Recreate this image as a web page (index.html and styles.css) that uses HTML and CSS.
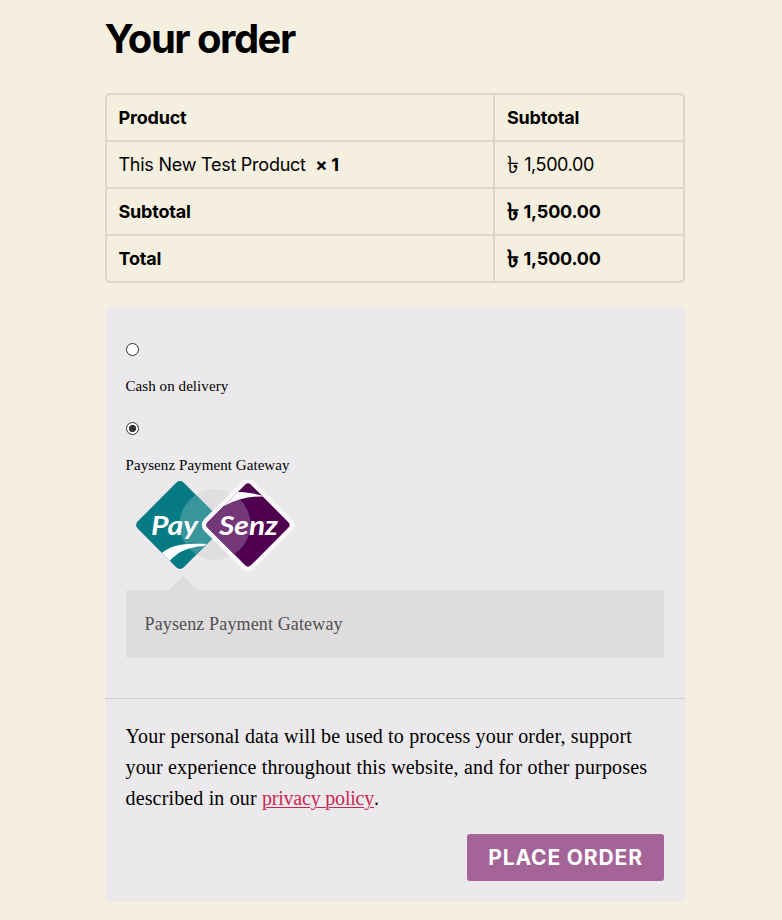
FILE: index.html
```html
<!DOCTYPE html>
<html lang="en">
<head>
<meta charset="utf-8">
<title>Checkout</title>
<link rel="stylesheet" href="styles.css">
</head>
<body>
<main class="checkout">
  <h3 class="heading">Your order</h3>
  <table class="order">
    <thead>
      <tr><th>Product</th><th>Subtotal</th></tr>
    </thead>
    <tbody>
      <tr><td>This New Test Product&nbsp; <strong class="quantity">×&nbsp;1</strong></td><td class="price"><span class="taka">৳</span>&nbsp;1,500.00</td></tr>
    </tbody>
    <tfoot>
      <tr><th>Subtotal</th><th><span class="taka">৳</span>&nbsp;1,500.00</th></tr>
      <tr><th>Total</th><th><span class="taka">৳</span>&nbsp;1,500.00</th></tr>
    </tfoot>
  </table>
  <section class="payment">
    <ul class="methods">
      <li class="method">
        <input class="radio" type="radio" name="payment" id="cod">
        <label class="method-label" for="cod">Cash on delivery</label>
      </li>
      <li class="method">
        <input class="radio" type="radio" name="payment" id="paysenz" checked>
        <label class="method-label" for="paysenz">Paysenz Payment Gateway
          <svg class="logo" width="180" height="100" viewBox="0 0 180 100" role="img" aria-label="PaySenz">
            <defs>
              <clipPath id="teal"><rect x="22.5" y="12.5" width="65" height="65" rx="5" transform="rotate(45 55 45)"/></clipPath>
              <clipPath id="plum"><rect x="92.5" y="14.5" width="61" height="61" rx="4" transform="rotate(45 123 45)"/></clipPath>
            </defs>
            <circle cx="90" cy="44.500" r="35.500" fill="#e0dedf"/>
            <g clip-path="url(#teal)">
              <rect x="8" width="94" height="92" fill="#067b84"/>
              <circle cx="90" cy="44.500" r="35.500" fill="#38959c"/>
              <path d="M35 75C44 65 58 63 82 64L79 66C63 67 53 71 43 83Z" fill="#fff"/>
            </g>
            <rect x="88" y="10" width="70" height="70" rx="8" transform="rotate(45 123 45)" fill="#f9f7f9"/>
            <g clip-path="url(#plum)">
              <rect x="77" width="92" height="92" fill="#500050"/>
              <circle cx="90" cy="44.500" r="35.500" fill="#743778"/>
              <path d="M98 25L108 12C117 12 128 12.500 140 16.500Q118 15.500 99 26Z" fill="#fff"/>
            </g>
            <text class="logo-text" x="26" y="54.500" textLength="47" lengthAdjust="spacingAndGlyphs">Pay</text>
            <text class="logo-text" x="94" y="54.500" textLength="59" lengthAdjust="spacingAndGlyphs">Senz</text>
          </svg>
        </label>
        <div class="description">Paysenz Payment Gateway</div>
      </li>
    </ul>
    <div class="place">
      <p class="privacy"><span class="line">Your personal data will be used to process your order, support</span> <span class="line">your experience throughout this website, and for other purposes</span> <span class="line line-last">described in our <a class="link" href="#">privacy policy</a>.</span></p>
      <button class="button" type="button">Place order</button>
    </div>
  </section>
</main>
</body>
</html>
```
FILE: styles.css
```css
* { box-sizing: border-box; }
body {
  margin: 0;
  background: #f5efe0;
  color: #000;
  font-family: Inter, "Noto Sans", sans-serif;
}
.checkout { width: 580px; margin: 0 0 0 105px; padding-top: 14px; }
.heading { margin: 0 0 29px; font-size: 40px; line-height: 50px; font-weight: 700; letter-spacing: -1.5px; text-indent: -0.5px; }
.order {
  width: 580px;
  table-layout: fixed;
  border: 2px solid #dcd7ca;
  border-radius: 5px;
  border-spacing: 0;
  border-collapse: separate;
  font-size: 18px;
  line-height: 27px;
  overflow: hidden;
}
.order th, .order td { padding: 9px 12px; height: 47px; text-align: left; white-space: nowrap; }
.order tr > :first-child { padding-left: 11.5px; border-right: 2px solid #dcd7ca; }
.order thead th, .order tbody td, .order tfoot tr:first-child th { border-bottom: 2px solid #dcd7ca; }
.order tfoot tr:last-child th { height: 45px; }
.order th { font-weight: 700; letter-spacing: -0.2px; }
.order td { font-weight: 400; letter-spacing: -0.25px; }
.order .price { letter-spacing: -0.4px; }
.quantity { font-weight: 700; letter-spacing: -0.3px; }
.order thead th:first-child { width: 388px; }
.taka { position: relative; top: 2px; display: inline-block; width: 12.5px; font-size: 24px; line-height: 0; letter-spacing: 0; }
.payment { margin-top: 24px; height: 595px; background: #ebe9eb; border-radius: 5px; }
.methods { margin: 0; padding: 35px 21px 0 20.5px; height: 392px; list-style: none; border-bottom: 1px solid #d0cdd2; }
.method { height: 79px; }
.radio {
  display: block;
  appearance: none;
  width: 13px;
  height: 13px;
  margin: 1px 0 15px;
  border: 1px solid #333;
  border-radius: 50%;
  background: #fff;
}
.method + .method .radio { margin-top: 0; }
.radio:checked { background: radial-gradient(circle, #333 0 3.3px, #fff 3.9px); }
.method-label { display: block; font-family: "Liberation Serif", serif; font-size: 15px; line-height: 30px; letter-spacing: 0.07px; }
.logo { display: block; margin: 0 0 0 -0.5px; }
.logo-text { font: italic 700 27px Lato, sans-serif; fill: #fff; letter-spacing: 0; }
.description {
  position: relative;
  margin-top: 10px;
  height: 68px;
  padding: 19px;
  border-radius: 2px;
  background: #dfdcde;
  color: #515151;
  font: 18px/30px "Liberation Serif", serif;
  letter-spacing: 0.14px;
}
.description::before {
  content: "";
  position: absolute;
  left: 43px;
  top: -14px;
  border: solid transparent;
  border-width: 0 14px 14px;
  border-bottom-color: #dfdcde;
}
.place { display: flex; flex-direction: column; padding: 22px 21px 0 20.5px; }
.privacy { margin: 0; font: 20px/31px "Liberation Serif", serif; }
.line { display: block; white-space: nowrap; letter-spacing: 0.18px; }
.line-last { letter-spacing: 0.15px; }
.link { color: #cd2653; letter-spacing: -0.2px; text-underline-offset: 2px; text-decoration-thickness: 1px; }
.button {
  align-self: flex-end;
  width: 197px;
  height: 47px;
  margin-top: 20px;
  padding: 0;
  border: 0;
  border-radius: 3px;
  background: #a46497;
  color: #fff;
  font: 700 21px/47px Inter, sans-serif;
  letter-spacing: 0.85px;
  text-transform: uppercase;
}
```
